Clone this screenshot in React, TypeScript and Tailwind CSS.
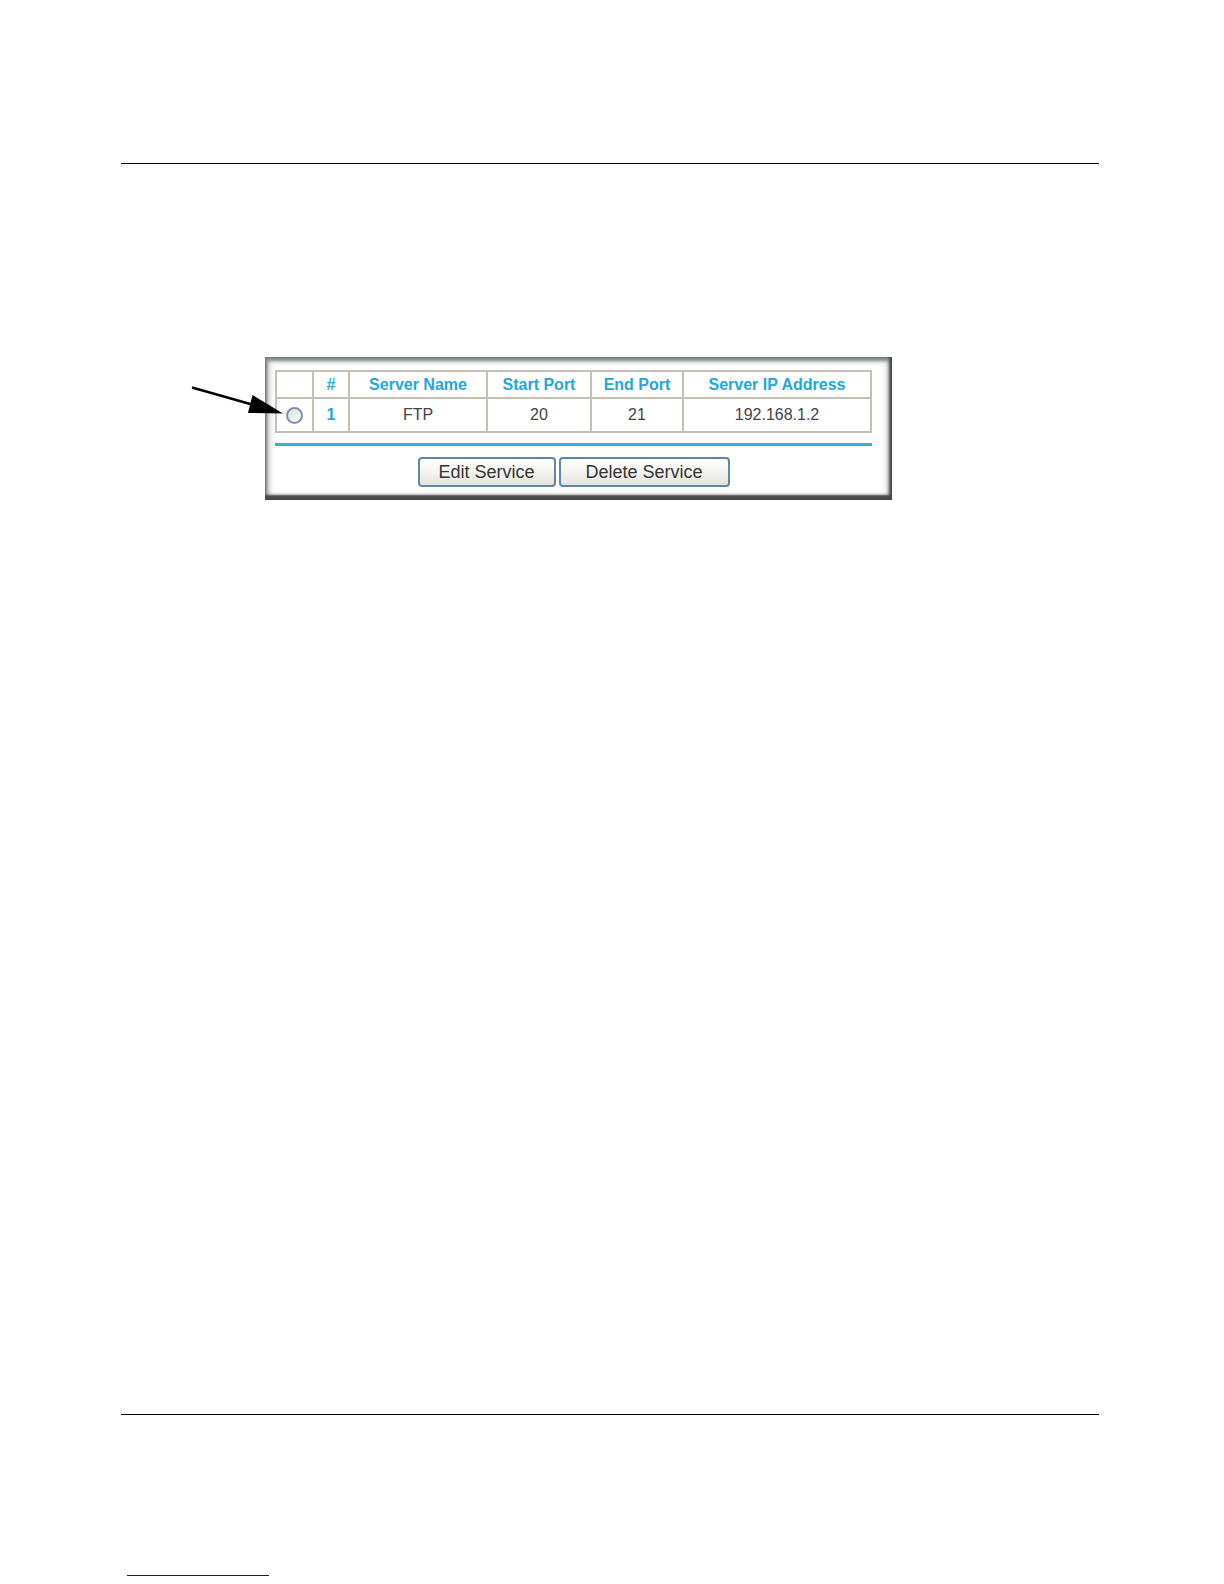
import { useState } from 'react';

interface Service {
  id: number;
  name: string;
  startPort: number;
  endPort: number;
  address: string;
}

const services: Service[] = [
  { id: 1, name: 'FTP', startPort: 20, endPort: 21, address: '192.168.1.2' },
];

const cell = 'border-2 border-[#c6c0b4] p-0 text-center';
const heading = `${cell} font-bold text-[#22a7dc]`;
const button =
  'h-[30px] rounded-[4px] border-2 border-[#5f86ad] bg-linear-to-b from-white via-[#f4f4f0] to-[#e4e2da] text-lg leading-6 text-[#333]';

function Pointer() {
  return (
    <svg
      className="absolute top-[29px] -left-[74px] h-[32px] w-[92px]"
      viewBox="0 0 92 32"
      aria-hidden="true"
    >
      <path d="M1 1.5 61 18.5" stroke="#000" strokeWidth="2.4" />
      <path d="M61.500 9 92 27.500 57 27Z" fill="#000" />
    </svg>
  );
}

function ServiceTable() {
  const [selected, setSelected] = useState<number | null>(null);

  return (
    <table className="w-full table-fixed border-collapse text-base leading-5 text-[#444]">
      <colgroup>
        <col className="w-[37px]" />
        <col className="w-[36px]" />
        <col className="w-[138px]" />
        <col className="w-[104px]" />
        <col className="w-[92px]" />
        <col />
      </colgroup>
      <thead>
        <tr className="h-[27px]">
          <td className={cell} />
          <th className={heading}>#</th>
          <th className={heading}>Server Name</th>
          <th className={heading}>Start Port</th>
          <th className={heading}>End Port</th>
          <th className={heading}>Server IP Address</th>
        </tr>
      </thead>
      <tbody>
        {services.map((s) => (
          <tr key={s.id} className="h-[34px]">
            <td className={cell}>
              <input
                type="radio"
                name="service"
                aria-label={s.name}
                checked={selected === s.id}
                onChange={() => setSelected(s.id)}
                className="mx-auto block size-[17px] appearance-none rounded-full border-2 border-[#7d8fb0] bg-linear-to-br from-[#dcdcd8] to-white checked:bg-[#5f86ad]"
              />
            </td>
            <td className={heading}>{s.id}</td>
            <td className={cell}>{s.name}</td>
            <td className={cell}>{s.startPort}</td>
            <td className={cell}>{s.endPort}</td>
            <td className={cell}>{s.address}</td>
          </tr>
        ))}
      </tbody>
    </table>
  );
}

export default function App() {
  return (
    <div className="flex min-h-screen flex-col bg-white pr-[125px] pl-[121px] font-['Liberation_Sans',Arial,sans-serif]">
      <header className="pt-[163px]">
        <hr className="border-black" />
      </header>

      <main className="grow pt-[193px] pl-36">
        <section className="relative max-w-[627px] bg-white pt-[13px] pr-5 pb-[13px] pl-[10px] shadow-[inset_0_-5px_2px_#484848,inset_-3px_0_3px_#4b4b4b,inset_0_4px_3px_#8b9997,inset_2px_0_3px_#858585,inset_0_0_7px_3px_#a8a8a8]">
          <ServiceTable />
          <hr className="mt-[10px] border-t-3 border-[#2db0dc]" />
          <div className="mt-[11px] flex justify-center gap-[3px]">
            <button type="button" className={`${button} w-[138px]`}>
              Edit Service
            </button>
            <button type="button" className={`${button} w-[171px]`}>
              Delete Service
            </button>
          </div>
          <Pointer />
        </section>
      </main>

      <footer className="pb-2">
        <hr className="border-black" />
        <hr className="mt-40 ml-[6px] w-[142px] border-[#12128c]" />
      </footer>
    </div>
  );
}
